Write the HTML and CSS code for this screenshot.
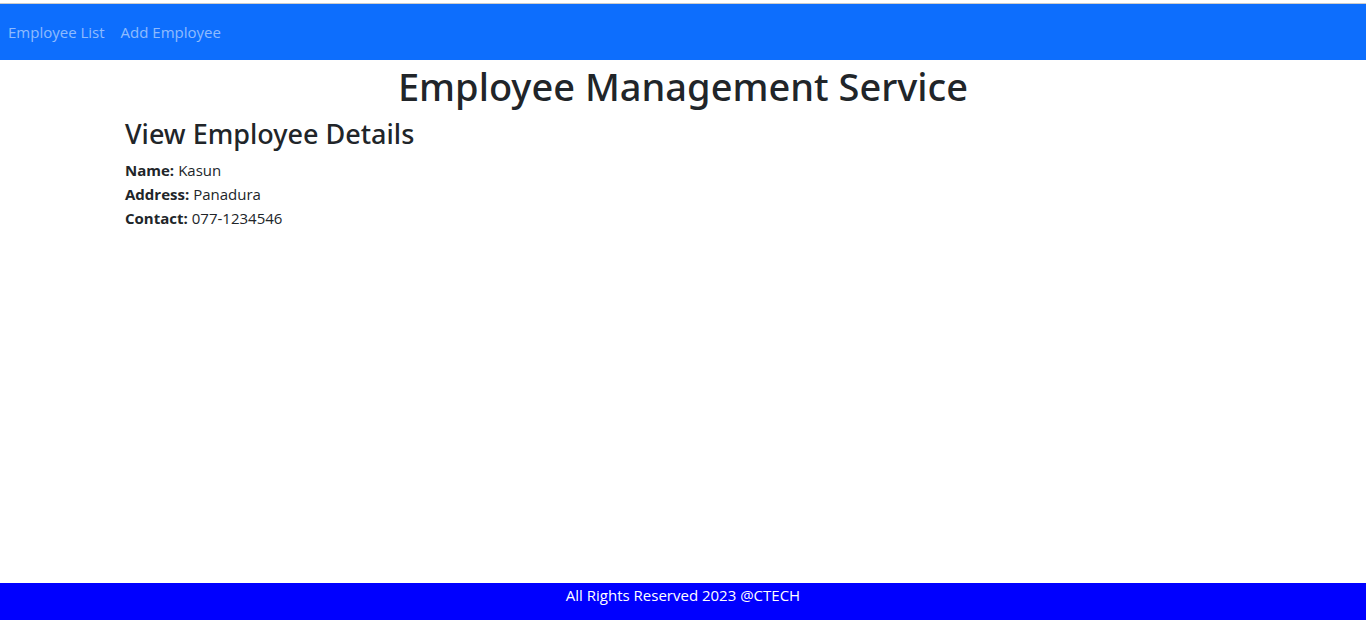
FILE: index.html
```html
<!DOCTYPE html>
<html lang="en">
<head>
<meta charset="utf-8">
<title>Employee Management Service</title>
<link rel="stylesheet" href="styles.css">
</head>
<body>
<header class="header">
<nav class="navbar">
<a class="nav-link" href="#list">Employee List</a>
<a class="nav-link" href="#add">Add Employee</a>
</nav>
</header>
<main class="main">
<h1 class="title">Employee Management Service</h1>
<section class="container">
<h2 class="subtitle">View Employee Details</h2>
<dl class="details">
<div class="row"><dt>Name:</dt><dd>Kasun</dd></div>
<div class="row"><dt>Address:</dt><dd>Panadura</dd></div>
<div class="row"><dt>Contact:</dt><dd>077-1234546</dd></div>
</dl>
</section>
</main>
<footer class="footer">All Rights Reserved 2023 @CTECH</footer>
</body>
</html>
```
FILE: styles.css
```css
*, *::before, *::after { box-sizing: border-box; }

body {
  margin: 0;
  min-height: 100vh;
  display: flex;
  flex-direction: column;
  font: 400 15px/24px "Segoe UI", "Open Sans", "Noto Sans", sans-serif;
  color: #212529;
  background: #fff;
}

.header { padding-top: 3px; }

.main { flex: 1; }

.navbar {
  display: flex;
  align-items: center;
  padding: 8px 0;
  border-top: 1px solid #ccc;
  background: #0d6efd;
}

.nav-link {
  padding: 8px;
  color: rgba(255, 255, 255, 0.55);
  text-decoration: none;
}

.title,
.subtitle {
  margin: 0 0 8px;
  font-family: "Segoe UI", "Noto Sans", "Open Sans", sans-serif;
  font-weight: 500;
}

.title {
  padding-top: 2px;
  font-size: 38px;
  line-height: 48px;
  text-align: center;
}

.container {
  width: 100%;
  max-width: 1140px;
  margin: 0 auto;
  padding: 0 12px;
}

.subtitle {
  font-size: 27px;
  line-height: 32px;
}

.details { margin: 0; }
.row { display: flex; gap: 4px; }
.row dt { font-weight: 700; }
.row dd { margin: 0; }

.footer {
  min-height: 37px;
  text-align: center;
  color: #fff;
  background: #00f;
}
```
